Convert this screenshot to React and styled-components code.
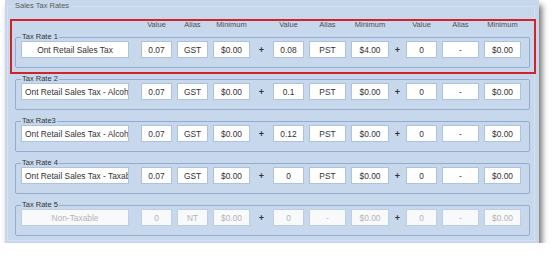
import React from "react";
import styled, { createGlobalStyle } from "styled-components";

const GlobalStyle = createGlobalStyle`
  body {
    margin: 0;
    background: #ffffff;
    font-family: "Liberation Sans", Arial, sans-serif;
  }
`;

const Panel = styled.div`
  position: relative;
  box-sizing: border-box;
  margin-left: 5px;
  width: 534px;
  height: 243px;
  padding: 1px 0 0 0;
  background: #c7d8ed;
  box-shadow: 3px 5px 6px rgba(0, 0, 0, 0.55);
`;

const Outer = styled.fieldset`
  box-sizing: border-box;
  margin: 0 4px 0 2px;
  padding: 8px 4px 4px 7px;
  border: 1px solid #d6e2f1;
  min-inline-size: 0;
`;

const OuterLegend = styled.legend`
  margin-left: -2px;
  padding: 0 2px;
  font-size: 7.5px;
  line-height: 10px;
  color: #5a5a5a;
`;

const HeaderRow = styled.div`
  display: flex;
  align-items: center;
  height: 10px;
  margin: 0 0 4px 6px;
  font-size: 7.5px;
  color: #505050;
`;

const Spacer = styled.span`
  width: ${p => p.$w}px;
  flex: none;
`;

const Head = styled.span`
  width: ${p => p.$w}px;
  flex: none;
  text-align: center;
  white-space: nowrap;
`;

const RateSet = styled.fieldset`
  box-sizing: border-box;
  height: 35px;
  margin: 0 0 7px 0;
  padding: 0 8px 9px 5px;
  border: 1px solid #93acd0;
  border-radius: 2px;
  min-inline-size: 0;

  &:last-of-type {
    margin-bottom: 0;
  }
`;

const RateLegend = styled.legend`
  padding: 0 1px;
  font-size: 7.5px;
  line-height: 8px;
  color: #333;
`;

const Row = styled.div`
  display: flex;
  align-items: center;
  height: 17px;
`;

const Group = styled.div`
  display: flex;
  gap: 5px;
  flex: none;
`;

const Field = styled.input`
  box-sizing: border-box;
  width: ${p => p.$w}px;
  height: 17px;
  flex: none;
  margin: 0;
  padding: ${p => (p.$left ? "0 0 0 3px" : "0")};
  border: 1px solid #adc2de;
  background: #ffffff;
  font-family: "Liberation Sans", Arial, sans-serif;
  font-size: 8.4px;
  color: #333;
  text-align: ${p => (p.$left ? "left" : "center")};
  outline: none;

  &:disabled {
    background: #f8f9fb;
    border-color: #bccde4;
    color: #b4b4b4;
  }
`;

const Plus = styled.span`
  width: ${p => p.$w}px;
  flex: none;
  text-align: center;
  font-size: 9px;
  font-weight: bold;
  color: #333;
`;

const Highlight = styled.div`
  position: absolute;
  left: 5px;
  top: 19px;
  width: 526px;
  height: 55px;
  box-sizing: border-box;
  border: 2px solid #d2232a;
  pointer-events: none;
`;

const widths = [
  [31, 31, 37],
  [31, 37, 38],
  [31, 37, 37],
];
const plusWidths = [23, 17];

const rates = [
  {
    label: "Tax Rate 1",
    name: "Ont Retail Sales Tax",
    groups: [["0.07", "GST", "$0.00"], ["0.08", "PST", "$4.00"], ["0", "-", "$0.00"]],
  },
  {
    label: "Tax Rate 2",
    name: "Ont Retail Sales Tax - Alcohol",
    left: true,
    groups: [["0.07", "GST", "$0.00"], ["0.1", "PST", "$0.00"], ["0", "-", "$0.00"]],
  },
  {
    label: "Tax Rate3",
    name: "Ont Retail Sales Tax - Alcohol",
    left: true,
    groups: [["0.07", "GST", "$0.00"], ["0.12", "PST", "$0.00"], ["0", "-", "$0.00"]],
  },
  {
    label: "Tax Rate 4",
    name: "Ont Retail Sales Tax - Taxable",
    left: true,
    groups: [["0.07", "GST", "$0.00"], ["0", "PST", "$0.00"], ["0", "-", "$0.00"]],
  },
  {
    label: "Tax Rate 5",
    name: "Non-Taxable",
    disabled: true,
    groups: [["0", "NT", "$0.00"], ["0", "-", "$0.00"], ["0", "-", "$0.00"]],
  },
];

const Headers = () => (
  <HeaderRow>
    <Spacer $w={120} />
    {widths.map((w, i) => (
      <React.Fragment key={i}>
        <Group>
          <Head $w={w[0]}>Value</Head>
          <Head $w={w[1]}>Alias</Head>
          <Head $w={w[2]}>Minimum</Head>
        </Group>
        {i < 2 && <Spacer $w={plusWidths[i]} />}
      </React.Fragment>
    ))}
  </HeaderRow>
);

const TaxRate = ({ rate }) => (
  <RateSet>
    <RateLegend>{rate.label}</RateLegend>
    <Row>
      <Field
        $w={108}
        $left={rate.left}
        value={rate.name}
        readOnly
        disabled={rate.disabled}
        style={{ marginRight: 12 }}
      />
      {rate.groups.map((g, i) => (
        <React.Fragment key={i}>
          <Group>
            {g.map((v, j) => (
              <Field key={j} $w={widths[i][j]} value={v} readOnly disabled={rate.disabled} />
            ))}
          </Group>
          {i < 2 && <Plus $w={plusWidths[i]}>+</Plus>}
        </React.Fragment>
      ))}
    </Row>
  </RateSet>
);

export default function App() {
  return (
    <>
      <GlobalStyle />
      <Panel>
        <Outer>
          <OuterLegend>Sales Tax Rates</OuterLegend>
          <Headers />
          {rates.map(r => (
            <TaxRate key={r.label} rate={r} />
          ))}
        </Outer>
        <Highlight />
      </Panel>
    </>
  );
}
